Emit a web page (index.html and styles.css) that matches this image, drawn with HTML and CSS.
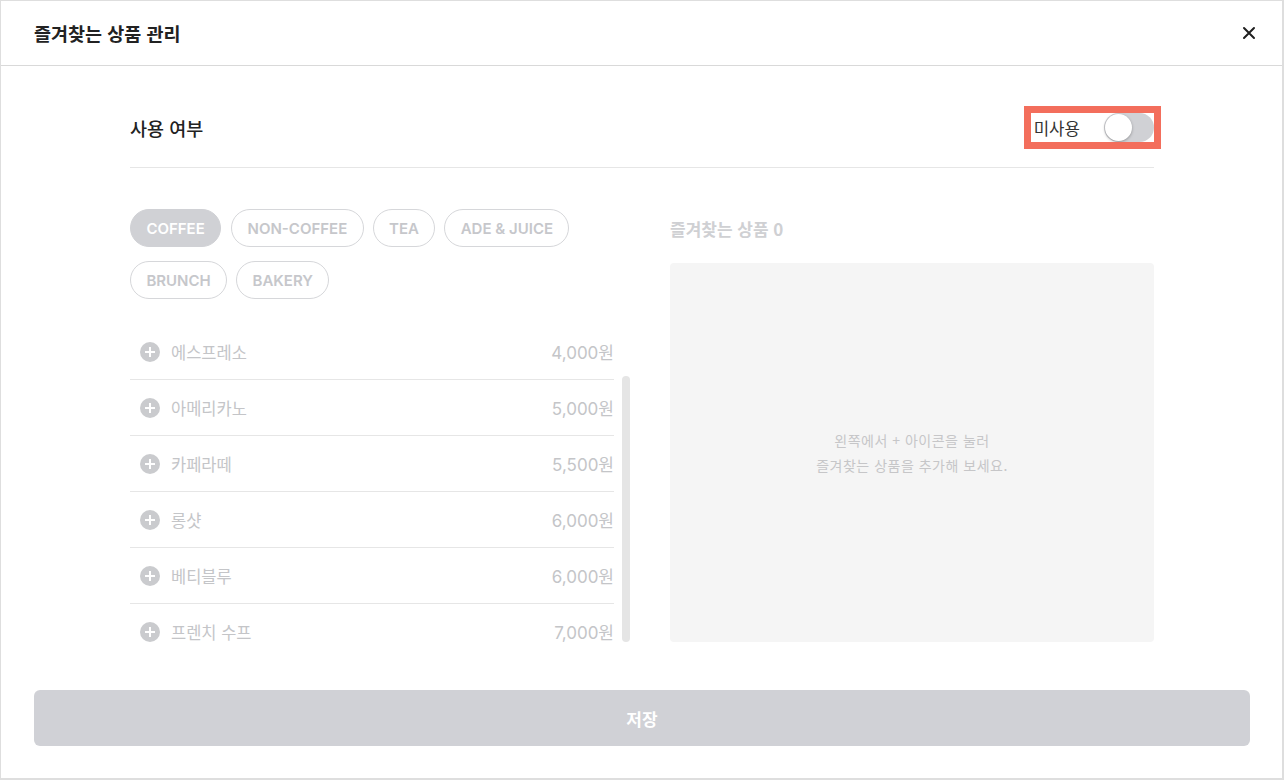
FILE: index.html
```html
<!DOCTYPE html>
<html lang="ko">
<head>
<meta charset="utf-8">
<title>즐겨찾는 상품 관리</title>
<link rel="stylesheet" href="styles.css">
</head>
<body>
<div class="modal">
  <header class="modal-header">
    <h1 class="modal-title">즐겨찾는 상품 관리</h1>
    <button class="close-btn" aria-label="닫기">
      <svg width="14" height="14" viewBox="0 0 14 14"><path d="M2 2L12 12M12 2L2 12" stroke="#1f1f1f" stroke-width="2" stroke-linecap="round"/></svg>
    </button>
  </header>
  <main class="modal-body">
    <div class="usage-row">
      <span class="usage-label">사용 여부</span>
      <div class="usage-control">
        <span class="usage-state">미사용</span>
        <span class="toggle"><span class="toggle-knob"></span></span>
      </div>
    </div>
    <div class="columns">
      <section class="left-col">
        <div class="chips">
          <span class="chip chip-active">COFFEE</span>
          <span class="chip">NON-COFFEE</span>
          <span class="chip">TEA</span>
          <span class="chip">ADE &amp; JUICE</span>
          <span class="chip">BRUNCH</span>
          <span class="chip">BAKERY</span>
        </div>
        <div class="list-wrap">
          <ul class="product-list">
            <li class="product"><span class="plus"></span><span class="name">에스프레소</span><span class="price">4,000원</span></li>
            <li class="product"><span class="plus"></span><span class="name">아메리카노</span><span class="price">5,000원</span></li>
            <li class="product"><span class="plus"></span><span class="name">카페라떼</span><span class="price">5,500원</span></li>
            <li class="product"><span class="plus"></span><span class="name">롱샷</span><span class="price">6,000원</span></li>
            <li class="product"><span class="plus"></span><span class="name">베티블루</span><span class="price">6,000원</span></li>
            <li class="product"><span class="plus"></span><span class="name">프렌치 수프</span><span class="price">7,000원</span></li>
          </ul>
          <div class="scrollbar"><div class="thumb"></div></div>
        </div>
      </section>
      <section class="right-col">
        <h2 class="fav-title">즐겨찾는 상품 0</h2>
        <div class="fav-box">
          <p class="fav-empty">왼쪽에서 + 아이콘을 눌러<br>즐겨찾는 상품을 추가해 보세요.</p>
        </div>
      </section>
    </div>
  </main>
  <footer class="modal-footer">
    <button class="save-btn">저장</button>
  </footer>
</div>
</body>
</html>
```
FILE: styles.css
```css
* { box-sizing: border-box; }
html, body { margin: 0; padding: 0; }
body {
  background: #dedede;
  padding: 1px 2px 2px 1px;
  font-family: "Inter", "Noto Sans CJK KR", sans-serif;
  color: #222;
}
.modal {
  height: 777px;
  background: #fff;
  display: flex;
  flex-direction: column;
}
.modal-header {
  height: 65px;
  flex: none;
  border-bottom: 1px solid #d9d9d9;
  display: flex;
  align-items: center;
  justify-content: space-between;
  padding: 0 26px 0 33px;
}
.modal-title {
  margin: 0;
  font-family: "Noto Sans CJK KR", sans-serif;
  font-size: 18.5px;
  font-weight: 700;
  color: #222;
}
.close-btn {
  border: 0;
  background: none;
  padding: 0;
  width: 14px;
  height: 14px;
  display: flex;
}
.modal-body {
  flex: 1;
  min-height: 0;
  padding: 23px 128px 0 129px;
  display: flex;
  flex-direction: column;
}
.usage-row {
  height: 79px;
  flex: none;
  display: flex;
  align-items: center;
  justify-content: space-between;
  border-bottom: 1px solid #e6e6e6;
  padding-bottom: 1px;
}
.usage-label {
  font-family: "Noto Sans CJK KR", sans-serif;
  font-size: 18.5px;
  font-weight: 500;
  color: #222;
}
.usage-control {
  display: flex;
  align-items: center;
  gap: 24px;
  height: 29px;
  padding-left: 3px;
  outline: 7px solid #f36e5c;
}
.usage-state {
  font-family: "Noto Sans CJK KR", sans-serif;
  font-size: 16.8px;
  color: #333;
}
.toggle {
  width: 50px;
  height: 29px;
  border-radius: 15px;
  background: #d0d1d5;
  display: flex;
  align-items: center;
  padding-left: 1px;
}
.toggle-knob {
  width: 27px;
  height: 27px;
  border-radius: 50%;
  background: #fff;
  box-shadow: 0 1px 3px rgba(0,0,0,0.3);
}
.columns {
  flex: 1;
  min-height: 0;
  display: flex;
  gap: 40px;
  padding-top: 41px;
}
.left-col {
  width: 500px;
  flex: none;
  display: flex;
  flex-direction: column;
}
.chips {
  display: flex;
  flex-wrap: wrap;
  gap: 14px 9px;
  padding-right: 40px;
}
.chip {
  height: 38px;
  padding: 0 15.4px;
  border: 1px solid #d6d7da;
  border-radius: 19px;
  display: flex;
  align-items: center;
  font-size: 15px;
  font-weight: 600;
  color: #c6c7cb;
}
.chip-active {
  background: #d0d1d5;
  border-color: #d0d1d5;
  color: #fff;
  margin-right: 1px;
}
.list-wrap {
  flex: 1;
  min-height: 0;
  display: flex;
  margin-top: 25px;
}
.product-list {
  flex: 1;
  margin: 0;
  padding: 0;
  list-style: none;
  overflow: hidden;
}
.product {
  height: 56px;
  display: flex;
  align-items: center;
  border-bottom: 1px solid #e6e6e6;
  padding: 0 0 0 10px;
}
.plus {
  width: 20px;
  height: 20px;
  border-radius: 50%;
  background: #cacbce;
  position: relative;
  flex: none;
  margin-right: 11px;
}
.plus::before, .plus::after {
  content: "";
  position: absolute;
  background: #fff;
  left: 50%;
  top: 50%;
  transform: translate(-50%, -50%);
}
.plus::before { width: 10px; height: 2px; }
.plus::after { width: 2px; height: 10px; }
.name {
  flex: 1;
  font-family: "Noto Sans CJK KR", sans-serif;
  font-size: 16.5px;
  color: #c4c5c8;
}
.price {
  font-size: 17px;
  color: #c4c5c8;
}
.scrollbar {
  width: 16px;
  flex: none;
  padding: 52px 0 0 8px;
  display: flex;
}
.thumb {
  width: 8px;
  border-radius: 4px;
  background: #e5e5e5;
}
.right-col {
  flex: 1;
  display: flex;
  flex-direction: column;
}
.fav-title {
  margin: 0 0 12px;
  height: 42px;
  line-height: 40px;
  font-family: "Noto Sans CJK KR", sans-serif;
  font-size: 17px;
  font-weight: 600;
  color: #cfd0d3;
}
.fav-box {
  flex: 1;
  background: #f5f5f5;
  border-radius: 4px;
  display: flex;
  align-items: center;
  justify-content: center;
}
.fav-empty {
  margin: 0;
  text-align: center;
  font-family: "Noto Sans CJK KR", sans-serif;
  font-size: 14px;
  letter-spacing: 0.5px;
  line-height: 25px;
  color: #c6c6c8;
}
.modal-footer {
  flex: none;
  padding: 48px 32px 32px 33px;
}
.save-btn {
  width: 100%;
  height: 56px;
  border: 0;
  border-radius: 6px;
  background: #d0d1d6;
  color: #fff;
  font-family: "Noto Sans CJK KR", sans-serif;
  font-size: 17px;
  font-weight: 600;
}
```
